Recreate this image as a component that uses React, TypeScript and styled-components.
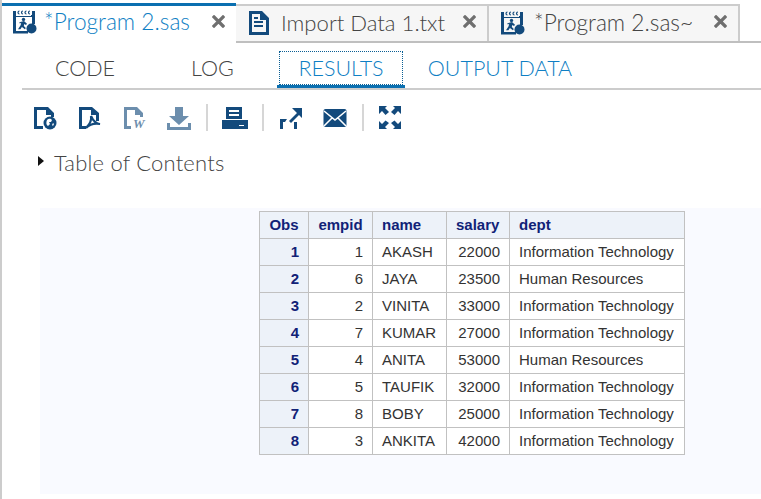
import React from "react";
import styled, { createGlobalStyle } from "styled-components";

const Global = createGlobalStyle`
  html, body { margin: 0; padding: 0; background: #fff; overflow: hidden; }
  body { font-family: "Lato", "Liberation Sans", sans-serif; }
`;

const Page = styled.div`
  width: 761px;
  height: 499px;
  box-sizing: border-box;
  border-left: 2px solid #cccccc;
  background: #fff;
  overflow: hidden;
`;

const TabStrip = styled.div`
  display: flex;
  align-items: flex-start;
  height: 43px;
  box-sizing: border-box;
  padding-top: 3px;
  border-bottom: 2px solid #bfbfbf;
`;

const Tab = styled.div<{ $active?: boolean; $width: number }>`
  width: ${(p) => p.$width}px;
  height: ${(p) => (p.$active ? 40 : 37)}px;
  box-sizing: border-box;
  margin-top: ${(p) => (p.$active ? 0 : 1)}px;
  display: flex;
  align-items: center;
  flex: none;
  position: relative;
  z-index: ${(p) => (p.$active ? 1 : 0)};
  padding: ${(p) => (p.$active ? "0 0 5px 11px" : "0 0 1px 12px")};
  background: ${(p) => (p.$active ? "#fff" : "#f6f6f6")};
  border-top: ${(p) => (p.$active ? "3px solid #0a6fb0" : "2px solid #cccccc")};
  border-right: ${(p) => (p.$active ? "none" : "2px solid #cccccc")};
`;

const TabLabel = styled.span<{ $active?: boolean; $gap: number; $size?: number }>`
  font-size: ${(p) => p.$size ?? 22.7}px;
  font-weight: 300;
  line-height: 24px;
  margin-left: ${(p) => p.$gap}px;
  color: ${(p) => (p.$active ? "#0f7fc4" : "#444444")};
  white-space: nowrap;
`;

const TabClose = styled.svg<{ $right: number }>`
  position: absolute;
  right: ${(p) => p.$right}px;
  top: 9px;
`;

const SubTabs = styled.div`
  display: flex;
  height: 47px;
  margin-left: 20px;
  box-sizing: border-box;
  border-bottom: 2px solid #cccccc;
  padding-top: 8px;
`;

const SubTab = styled.div<{ $active?: boolean; $blue?: boolean; $width: number }>`
  width: ${(p) => p.$width}px;
  height: 34px;
  box-sizing: border-box;
  margin: 0 2px;
  flex: none;
  display: flex;
  align-items: center;
  justify-content: center;
  position: relative;
  font-size: 21.5px;
  font-weight: 300;
  color: ${(p) => (p.$blue ? "#0f7fc4" : "#444444")};
  border: ${(p) => (p.$active ? "1px dotted #0a5f94" : "1px solid transparent")};
  &::after {
    content: "";
    display: ${(p) => (p.$active ? "block" : "none")};
    position: absolute;
    left: -3px;
    right: -3px;
    bottom: -4px;
    height: 3px;
    background: #0a6fb0;
  }
`;

const Toolbar = styled.div`
  display: flex;
  align-items: center;
  height: 27px;
  margin-top: 14px;
  padding-left: 32px;
`;

const ToolIcon = styled.svg<{ $gap: number }>`
  flex: none;
  margin-left: ${(p) => p.$gap}px;
`;

const Sep = styled.div<{ $gap: number }>`
  width: 2px;
  height: 27px;
  flex: none;
  margin-left: ${(p) => p.$gap}px;
  background: #d6d6d6;
`;

const TocRow = styled.div`
  display: flex;
  align-items: center;
  height: 26px;
  margin-top: 18px;
  padding-left: 36px;
  font-size: 22px;
  font-weight: 300;
  letter-spacing: 0.2px;
  color: #444444;
`;

const Triangle = styled.span`
  width: 0;
  height: 0;
  margin: -2px 10px 0 0;
  border-left: 6px solid #111;
  border-top: 5px solid transparent;
  border-bottom: 5px solid transparent;
`;

const ResultPanel = styled.div`
  margin: 33px 0 0 38px;
  height: 286px;
  background: #f9faff;
  padding: 3px 0 0 219px;
  box-sizing: border-box;
`;

const DataTable = styled.table`
  border-collapse: collapse;
  font-family: "Liberation Sans", Arial, sans-serif;
  font-size: 15px;
  background: #fff;
  table-layout: fixed;
  width: 426px;
`;

const Head = styled.th<{ $w: number; $center?: boolean }>`
  width: ${(p) => p.$w}px;
  height: 27px;
  padding: 0 9px 2px;
  box-sizing: border-box;
  border: 1px solid #c1c1c1;
  background: #edf2f9;
  color: #112277;
  font-weight: 700;
  text-align: ${(p) => (p.$center ? "center" : "left")};
`;

const RowHead = styled.th`
  height: 24px;
  padding: 0 9px 2px;
  border: 1px solid #c1c1c1;
  background: #edf2f9;
  color: #112277;
  font-weight: 700;
  text-align: right;
`;

const Cell = styled.td<{ $num?: boolean }>`
  height: 24px;
  padding: 0 9px 2px;
  border: 1px solid #c1c1c1;
  color: #333333;
  text-align: ${(p) => (p.$num ? "right" : "left")};
  white-space: nowrap;
`;

const NAVY = "#134a7c";

const ProgramIcon = () => (
  <svg width="24" height="24" viewBox="0 0 24 24" style={{ flex: "none" }}>
    <path fill="none" stroke={NAVY} strokeWidth="1.2" d="M6.5 1a1.5 1.5 0 0 0 0 3M10 1a1.5 1.5 0 0 0 0 3M13.5 1a1.5 1.5 0 0 0 0 3M17 1a1.5 1.5 0 0 0 0 3" />
    <path fill={NAVY} d="M0 1h3v5h15V5h1V1h3v13h-3V7H3v14h12v2.5H0z" />
    <circle cx="10.5" cy="9.4" r="1.7" fill={NAVY} />
    <path fill={NAVY} d="M7.5 12l3.5-1 3 2.8-1 1.1-1.7-1-.5 2 2 2-.9 1.4-3-2.4-1.5 2.4H5l2.6-4 .6-2.6-1.2.8-1-.8z" />
    <circle cx="18.5" cy="18.5" r="5" fill={NAVY} />
  </svg>
);

const DocIcon = () => (
  <svg width="21" height="24" viewBox="0 0 21 24" style={{ flex: "none" }}>
    <path fill={NAVY} fillRule="evenodd" d="M1 0h13l7 7v17H1zM4 3v18h14V9h-6V3z" />
    <path fill={NAVY} d="M6 10h9v2H6zM6 14h9v2H6zM6 6h4v2H6z" />
  </svg>
);

const CloseGlyph = ({ right }: { right: number }) => (
  <TabClose $right={right} width="13" height="13" viewBox="0 0 13 13">
    <path d="M2 2l9 9M11 2l-9 9" stroke="#6f6f6f" strokeWidth="3.2" strokeLinecap="square" />
  </TabClose>
);

const rows: [number, number, string, number, string][] = [
  [1, 1, "AKASH", 22000, "Information Technology"],
  [2, 6, "JAYA", 23500, "Human Resources"],
  [3, 2, "VINITA", 33000, "Information Technology"],
  [4, 7, "KUMAR", 27000, "Information Technology"],
  [5, 4, "ANITA", 53000, "Human Resources"],
  [6, 5, "TAUFIK", 32000, "Information Technology"],
  [7, 8, "BOBY", 25000, "Information Technology"],
  [8, 3, "ANKITA", 42000, "Information Technology"],
];

export default function App() {
  return (
    <Page>
      <Global />
      <TabStrip>
        <Tab $active $width={234}>
          <ProgramIcon />
          <TabLabel $active $gap={7}>*Program 2.sas</TabLabel>
          <CloseGlyph right={11} />
        </Tab>
        <Tab $width={253}>
          <DocIcon />
          <TabLabel $gap={12} $size={22.1}>Import Data 1.txt</TabLabel>
          <CloseGlyph right={11} />
        </Tab>
        <Tab $width={251}>
          <ProgramIcon />
          <TabLabel $gap={9}>*Program 2.sas~</TabLabel>
          <CloseGlyph right={11} />
        </Tab>
      </TabStrip>

      <SubTabs>
        <SubTab $width={122}>CODE</SubTab>
        <SubTab $width={125}>LOG</SubTab>
        <SubTab $active $blue $width={124}>RESULTS</SubTab>
        <SubTab $blue $width={186}>OUTPUT DATA</SubTab>
      </SubTabs>

      <Toolbar>
        <ToolIcon $gap={0} width="23" height="24" viewBox="0 0 23 24">
          <path fill={NAVY} fillRule="evenodd" d="M0 1h14l6 6v4h-3V9h-5V4H3v16h6v3H0z" />
          <circle cx="16" cy="17" r="6.5" fill={NAVY} />
          <path fill="#fff" d="M13 14c2-2 4-1 5 0l-1 2h-2l1 2-2 2c-2-1-2-4-1-6zM19 17l1 1-1 2-1-1z" />
        </ToolIcon>
        <ToolIcon $gap={22} width="22" height="24" viewBox="0 0 22 24">
          <path fill={NAVY} fillRule="evenodd" d="M0 1h13l7 6v8h-3V9h-5V4H3v16h4v3H0z" />
          <path fill="none" stroke={NAVY} strokeWidth="2.2" d="M12 10c1 5-2 9-5 12 3-3 8-5 14-4-3 0-7-3-9-8z" />
        </ToolIcon>
        <ToolIcon $gap={23} width="23" height="24" viewBox="0 0 23 24" opacity="0.62">
          <path fill={NAVY} fillRule="evenodd" d="M0 1h13l6 6v4h-3V9h-5V4H3v16h4v3H0z" />
          <text x="9" y="22" fontFamily="Liberation Serif, serif" fontWeight="700" fontStyle="italic" fontSize="13" fill={NAVY}>W</text>
        </ToolIcon>
        <ToolIcon $gap={20} width="24" height="24" viewBox="0 0 24 24" opacity="0.62">
          <path fill={NAVY} d="M8 1h8v9h6l-10 9L2 10h6zM0 17h3v4h18v-4h3v7H0z" />
        </ToolIcon>
        <Sep $gap={15} />
        <ToolIcon $gap={14} width="26" height="24" viewBox="0 0 26 24">
          <path fill={NAVY} fillRule="evenodd" d="M4 1h16v12H4zM7 4v2h10V4zM7 8v2h10V8z" />
          <path fill={NAVY} fillRule="evenodd" d="M0 14h26v9H0zM17 19v1h5v-1z" />
        </ToolIcon>
        <Sep $gap={14} />
        <ToolIcon $gap={15} width="24" height="24" viewBox="0 0 24 24">
          <path fill={NAVY} d="M13 2h10v10l-3-3-8 8-2-2 8-8zM1 13h7l-2 3H4v7H1zM15 16h3v7h-3z" />
        </ToolIcon>
        <ToolIcon $gap={20} width="24" height="24" viewBox="0 0 24 24">
          <rect x="0.5" y="3" width="23" height="18" rx="2" fill={NAVY} />
          <path d="M1 5l11 9 11-9M1 20l8-8M23 20l-8-8" stroke="#fff" strokeWidth="1.6" fill="none" />
        </ToolIcon>
        <Sep $gap={15} />
        <ToolIcon $gap={15} width="22" height="23" viewBox="0 0 22 23">
          <path fill={NAVY} d="M0 0h8L6 2l4 4-3.500 3L3 5 0 8zM22 0h-8l2 2-4 4 3.500 3L19 5l3 3zM0 23v-8l3 3 3.500-3.500L10 17l-4 4 2 2zM22 23v-8l-3 3-3.500-3.500L12 17l4 4-2 2z" />
        </ToolIcon>
      </Toolbar>

      <TocRow>
        <Triangle />
        Table of Contents
      </TocRow>

      <ResultPanel>
        <DataTable>
          <thead>
            <tr>
              <Head $w={49} $center>Obs</Head>
              <Head $w={64} $center>empid</Head>
              <Head $w={74}>name</Head>
              <Head $w={63}>salary</Head>
              <Head $w={175}>dept</Head>
            </tr>
          </thead>
          <tbody>
            {rows.map((r) => (
              <tr key={r[0]}>
                <RowHead>{r[0]}</RowHead>
                <Cell $num>{r[1]}</Cell>
                <Cell>{r[2]}</Cell>
                <Cell $num>{r[3]}</Cell>
                <Cell>{r[4]}</Cell>
              </tr>
            ))}
          </tbody>
        </DataTable>
      </ResultPanel>
    </Page>
  );
}
